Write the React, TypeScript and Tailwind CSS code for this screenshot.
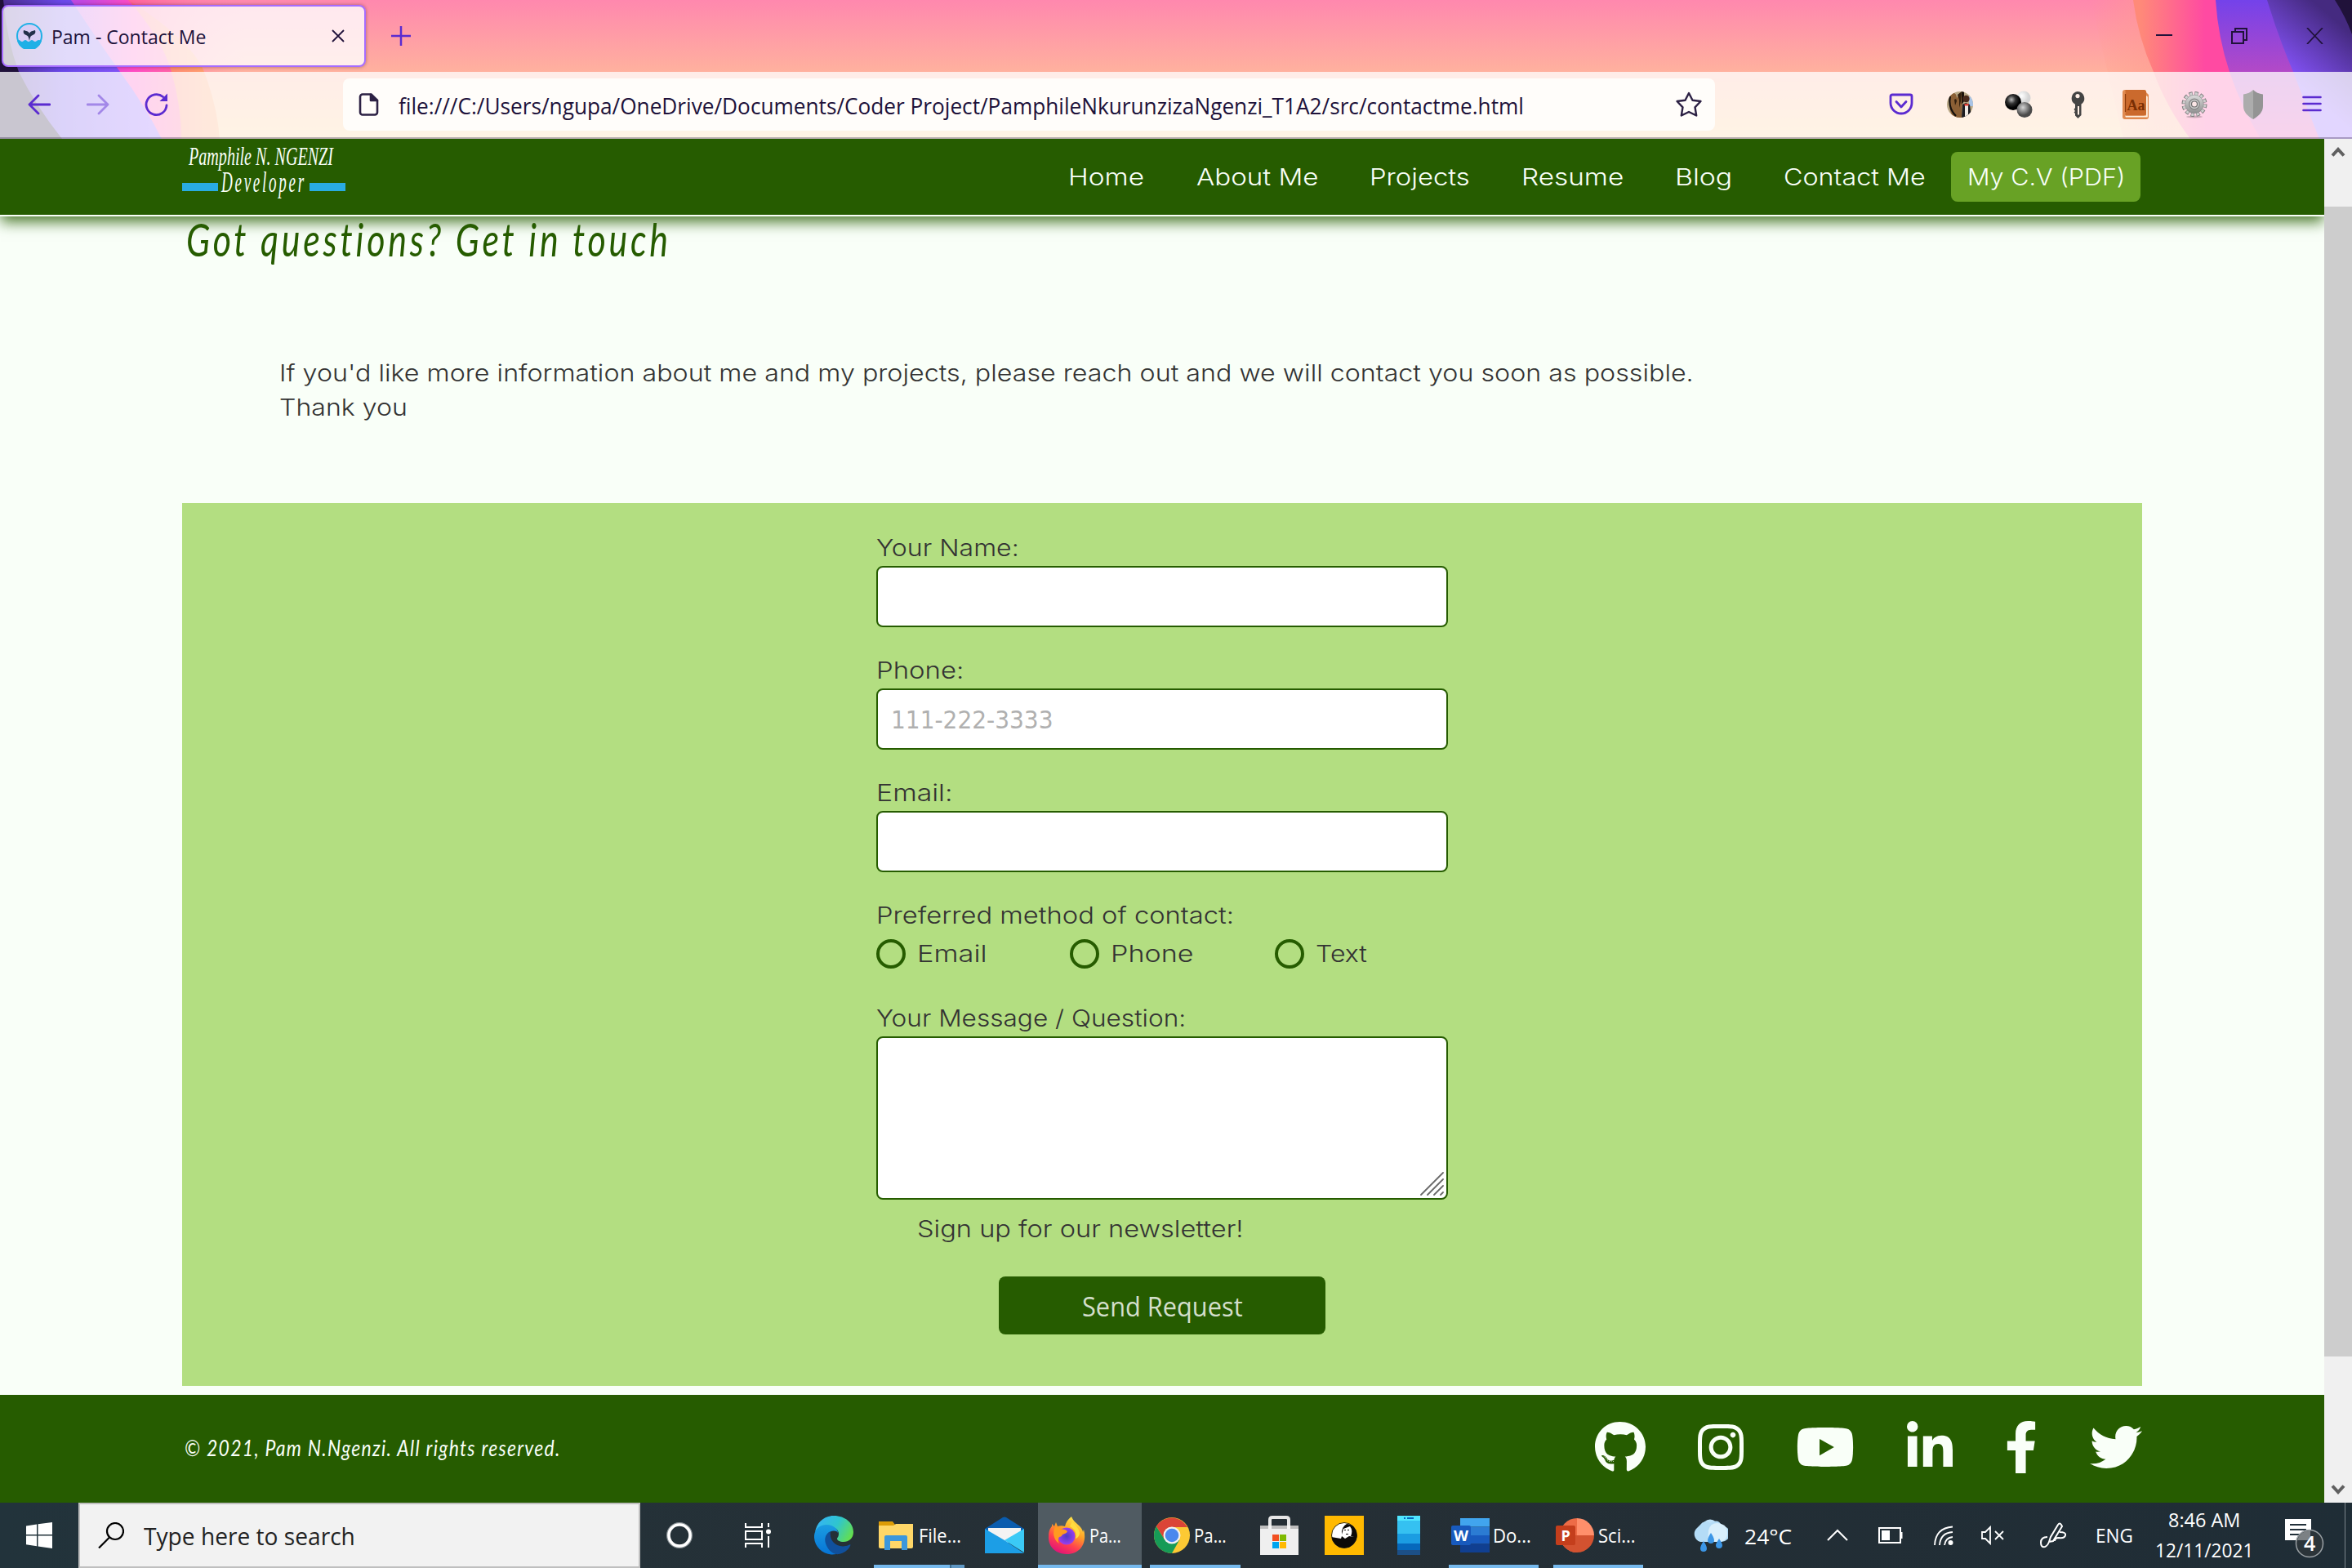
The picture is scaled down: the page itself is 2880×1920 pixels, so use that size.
import { useLayoutEffect, useRef, useState } from "react";
import type { ReactNode } from "react";
import { FaFacebookF, FaGithub, FaInstagram, FaLinkedinIn, FaTwitter, FaYoutube } from "react-icons/fa";

/* Single line of text stretched or condensed to a given width. */
function Fit({ w, className = "", children }: { w: number; className?: string; children: string }) {
  const ref = useRef<HTMLSpanElement>(null);
  const [scale, setScale] = useState(1);
  useLayoutEffect(() => {
    if (ref.current) setScale(w / ref.current.offsetWidth);
  }, [w]);
  return (
    <span className={`inline-block shrink-0 whitespace-nowrap ${className}`} style={{ width: w }}>
      <span ref={ref} className="inline-block origin-left" style={{ transform: `scaleX(${scale})` }}>
        {children}
      </span>
    </span>
  );
}

function ThemeArt() {
  return (
    <svg className="absolute inset-0" width="2880" height="170" viewBox="0 0 2880 170">
      <defs>
        <linearGradient id="base" x1="0" y1="0" x2="0" y2="1">
          <stop offset="0" stopColor="#ff88ae" />
          <stop offset=".52" stopColor="#ffb19e" />
          <stop offset="1" stopColor="#ffd090" />
        </linearGradient>
        <linearGradient id="lOrange" gradientUnits="userSpaceOnUse" x1="150" y1="0" x2="270" y2="0">
          <stop offset="0" stopColor="#ff5a8c" />
          <stop offset=".5" stopColor="#ff8a72" />
          <stop offset="1" stopColor="#ffa86e" />
        </linearGradient>
        <linearGradient id="lGlow" gradientUnits="userSpaceOnUse" x1="150" y1="0" x2="300" y2="0">
          <stop offset="0" stopColor="#ff5c98" />
          <stop offset="1" stopColor="#ff88ae" stopOpacity="0" />
        </linearGradient>
        <linearGradient id="lPink" gradientUnits="userSpaceOnUse" x1="100" y1="0" x2="225" y2="0">
          <stop offset="0" stopColor="#c048e0" />
          <stop offset=".5" stopColor="#ff4bc4" />
          <stop offset="1" stopColor="#ff6a9c" />
        </linearGradient>
        <linearGradient id="lPurple" gradientUnits="userSpaceOnUse" x1="0" y1="0" x2="190" y2="0">
          <stop offset="0" stopColor="#4a2c8c" />
          <stop offset=".4" stopColor="#6a48e8" />
          <stop offset="1" stopColor="#8f5cff" />
        </linearGradient>
        <linearGradient id="rPink" gradientUnits="userSpaceOnUse" x1="2620" y1="0" x2="2700" y2="0">
          <stop offset="0" stopColor="#ff8a78" />
          <stop offset="1" stopColor="#ff4aa2" />
        </linearGradient>
        <linearGradient id="rGlow" gradientUnits="userSpaceOnUse" x1="2560" y1="0" x2="2640" y2="0">
          <stop offset="0" stopColor="#ff9a84" stopOpacity="0" />
          <stop offset="1" stopColor="#ff9a90" stopOpacity=".6" />
        </linearGradient>
        <linearGradient id="rPurple" x1="0" y1="0" x2="0" y2="1">
          <stop offset="0" stopColor="#7442ea" />
          <stop offset=".5" stopColor="#b149c8" />
          <stop offset="1" stopColor="#e04ab0" />
        </linearGradient>
        <linearGradient id="rViolet" gradientUnits="userSpaceOnUse" x1="2800" y1="95" x2="2860" y2="25">
          <stop offset="0" stopColor="#8855ff" />
          <stop offset="1" stopColor="#452a80" />
        </linearGradient>
      </defs>
      <rect width="2880" height="170" fill="url(#base)" />
      <path d="M150 0H300V88H190Z" fill="url(#lGlow)" />
      <path d="M0 0H157C205 30 240 62 250 88Q266 130 269 170H0Z" fill="url(#lOrange)" />
      <path d="M0 0H157Q198 46 210 88Q222 130 222 170H0Z" fill="url(#lPink)" />
      <path d="M0 0H87Q120 50 147 88Q178 130 198 170H0Z" fill="url(#lPurple)" />
      <path d="M0 0H4Q8 48 23 88Q44 130 76 170H0Z" fill="#20123a" />
      <path d="M2560 0H2720V170H2600Z" fill="url(#rGlow)" />
      <path d="M2612 0Q2618 46 2637 88Q2652 130 2682 170H2880V0Z" fill="url(#rPink)" />
      <path d="M2713 0Q2716 46 2730 88Q2744 130 2768 170H2880V0Z" fill="url(#rPurple)" />
      <path d="M2776 0Q2790 46 2808 88Q2824 130 2840 170H2880V0Z" fill="url(#rViolet)" />
      <path d="M2859 0Q2872 20 2880 42V0Z" fill="#20123a" />
    </svg>
  );
}

function TabStrip() {
  return (
    <div className="relative flex h-[88px] items-center text-[#20123a]">
      <div className="ml-[2px] flex h-[76px] w-[446px] items-center rounded-lg border-2 border-[#a66cff] bg-white/80 pl-4 shadow-[0_0_4px_rgba(0,0,0,0.35)]">
        <svg width="32" height="32" viewBox="0 0 32 32">
          <circle cx="16" cy="16" r="15" fill="#d9cdf4" stroke="#1fb0e6" strokeWidth="2" />
          <path d="M1 22q2-2 4 0t4 0 4 0 4 0 4 0 4 0 6 0A15.500 15.500 0 0 1 1 22Z" fill="#1fb0e6" />
          <path d="M16 22c1-4 1-6 4-7 3-1 4-3 3-6-3 1-6 1-7 4-1-3-4-3-7-4-1 3 0 5 3 6 3 1 3 3 4 7Z" fill="#23304a" />
        </svg>
        <Fit w={189} className="ml-[11px] pt-0.5 text-[23px]">Pam - Contact Me</Fit>
        <svg className="ml-[154px]" width="16" height="16" viewBox="0 0 16 16" stroke="#20123a" strokeWidth="1.800">
          <path d="M1 1l14 14M15 1L1 15" />
        </svg>
      </div>
      <svg className="ml-[31px]" width="24" height="24" viewBox="0 0 24 24" stroke="#5b2bd0" strokeWidth="2.500">
        <path d="M0 12h24M12 0v24" />
      </svg>
      <svg className="ml-auto" width="20" height="20" viewBox="0 0 20 20">
        <path d="M0 9h20" stroke="#20123a" strokeWidth="2" />
      </svg>
      <svg className="ml-[72px]" width="20" height="20" viewBox="0 0 20 20" fill="none" stroke="#20123a" strokeWidth="2">
        <path d="M1 5h14v14H1zM5 5V1h14v14h-4" />
      </svg>
      <svg className="mr-[35px] ml-[72px]" width="21" height="20" viewBox="0 0 21 20" stroke="#20123a" strokeWidth="1.800">
        <path d="M1 0l19 20M20 0L1 20" />
      </svg>
    </div>
  );
}

function Toolbar() {
  return (
    <div className="relative flex h-[82px] items-center border-b-2 border-[#20123a]/30 bg-white/76 text-[#20123a]">
      <svg className="ml-[34px]" width="28" height="26" viewBox="0 0 28 26" fill="none" stroke="#5b2bd0" strokeWidth="2.800" strokeLinecap="round" strokeLinejoin="round">
        <path d="M27 13H2M13 2L2 13l11 11" />
      </svg>
      <svg className="ml-[44px] opacity-45" width="28" height="26" viewBox="0 0 28 26" fill="none" stroke="#5b2bd0" strokeWidth="2.800" strokeLinecap="round" strokeLinejoin="round">
        <path d="M1 13h25M15 2l11 11-11 11" />
      </svg>
      <svg className="ml-[43px]" width="30" height="30" viewBox="0 0 30 30" fill="none" stroke="#5b2bd0" strokeWidth="2.800" strokeLinecap="round">
        <path d="M27 16A12.500 12.500 0 1 1 22.500 5.500" />
        <path d="M28 1.500V11h-9.500Z" fill="#5b2bd0" stroke="none" />
      </svg>
      <div className="ml-[213px] flex h-16 w-[1680px] items-center rounded-lg bg-[#fffdfa]">
        <svg className="ml-[19px]" width="26" height="30" viewBox="0 0 26 30" fill="none" stroke="#2c2144" strokeWidth="2.600" strokeLinejoin="round">
          <path d="M5 2.500h10.500L23 10v14.500a3 3 0 0 1-3 3H5a3 3 0 0 1-3-3v-19a3 3 0 0 1 3-3Z" />
          <path d="M15 3v7h8Z" fill="#2c2144" />
        </svg>
        <Fit w={1378} className="ml-[23px] pt-1 text-[27.500px]">
          file:///C:/Users/ngupa/OneDrive/Documents/Coder Project/PamphileNkurunzizaNgenzi_T1A2/src/contactme.html
        </Fit>
        <svg className="ml-[185px]" width="34" height="32" viewBox="0 0 34 32" fill="none" stroke="#2c2144" strokeWidth="2.400" strokeLinejoin="round">
          <path d="M17 2l4.500 8.700 10 1.300-7 7.300 1.700 10.200L17 25l-9.200 4.500 1.700-10.200-7-7.300 10-1.300Z" />
        </svg>
      </div>
      {/* extension buttons */}
      <svg className="ml-[213px]" width="30" height="28" viewBox="0 0 30 28" fill="none" stroke="#5b2bd0" strokeWidth="2.800" strokeLinecap="round" strokeLinejoin="round">
        <path d="M4 2h22a2 2 0 0 1 2 2v8a13 13 0 0 1-26 0V4a2 2 0 0 1 2-2Z" />
        <path d="M9 10.500l6 6.500 6-6.500" />
      </svg>
      <svg className="ml-[41px]" width="32" height="32" viewBox="0 0 32 32">
        <clipPath id="av"><circle cx="16" cy="16" r="16" /></clipPath>
        <g clipPath="url(#av)">
          <path d="M0 0h32v32H0z" fill="#b9a886" />
          <path d="M4 4c4-4 8-2 8 4l4-6 3 2-1 28H8c-4-6-6-12-4-28Z" fill="#8b5f35" />
          <path d="M9 10q3-2 3 2l-2 5M18 0l-1 12-2 8V10l-2-6Z" fill="#33200f" />
          <path d="M18 0h3v12l-3 4Z" fill="#1d130c" />
          <path d="M4 6q-3 14 7 24" fill="none" stroke="#15100c" strokeWidth="2.200" />
          <path d="M27 6h5v12h-5z" fill="#a9c4e6" />
          <circle cx="23.500" cy="9" r="4.200" fill="#4a2a1c" />
          <path d="M19 16l4-2 5 2 2 16H18Z" fill="#1c1c22" />
          <path d="M22 15h4v17h-4z" fill="#efe9e4" />
          <path d="M21.500 15h5v2.500h-5z" fill="#e23b34" />
        </g>
      </svg>
      <svg className="ml-[39px]" width="34" height="34" viewBox="0 0 34 34">
        <defs>
          <radialGradient id="s1" cx=".35" cy=".35"><stop offset="0" stopColor="#fff" /><stop offset="1" stopColor="#d4d4d4" /></radialGradient>
          <radialGradient id="s2" cx=".4" cy=".35"><stop offset="0" stopColor="#bbb" /><stop offset=".5" stopColor="#333" /><stop offset="1" stopColor="#000" /></radialGradient>
          <radialGradient id="s3" cx=".4" cy=".35"><stop offset="0" stopColor="#d5d5d5" /><stop offset="1" stopColor="#4a4a4a" /></radialGradient>
        </defs>
        <circle cx="23" cy="9" r="8.500" fill="url(#s1)" />
        <circle cx="10" cy="14" r="10" fill="url(#s2)" />
        <circle cx="24" cy="23.500" r="9.500" fill="url(#s3)" />
      </svg>
      <svg className="ml-[46px]" width="18" height="33" viewBox="0 0 18 33">
        <path fillRule="evenodd" d="M9 0a8.500 8.500 0 0 1 4.500 15.500V29L9.500 33 6 29.500V27L4.500 25.500 6 24l-1.500-2L6 20v-4.200A8.500 8.500 0 0 1 9 0Zm0 3a2.600 2.600 0 1 0 .01 0ZM9 18v10.500h2V18Z" fill="#444" />
      </svg>
      <svg className="ml-[46px]" width="32" height="36" viewBox="0 -2 32 36">
        <path d="M3 -2h23a3 3 0 0 1 3 3l3 3v27a3 3 0 0 1-3 3H3a3 3 0 0 1-3-3V1a3 3 0 0 1 3-3Z" fill="#e08a50" />
        <path d="M3 29.500h26V5l1.800 1.500V31.500H4Z" fill="#fff0e0" />
        <path d="M3 -2h23a3 3 0 0 1 3 3v25.500a3 3 0 0 1-3 3H3.500V-2Z" fill="#cb6a2d" />
        <path d="M3.500 3v22" stroke="#8a3a0a" strokeWidth="1.200" />
        <text x="5.500" y="23" fontFamily="Liberation Serif" fontWeight="700" fontSize="18" textLength="22" fill="#7a2f04">Aa</text>
      </svg>
      <svg className="ml-10" width="32" height="34" viewBox="0 0 32 34">
        <defs><linearGradient id="gr" x1="0" y1="0" x2="0" y2="1"><stop offset="0" stopColor="#dcdcdc" /><stop offset="1" stopColor="#8f8f8f" /></linearGradient></defs>
        <ellipse cx="16" cy="32" rx="10" ry="1.500" fill="#000" opacity=".2" />
        <circle cx="16" cy="16.500" r="13" fill="none" stroke="#7d7d7d" strokeWidth="5" strokeDasharray="4.200 2.607" />
        <circle cx="16" cy="16.500" r="12.700" fill="none" stroke="#cfcfcf" strokeWidth="3.600" strokeDasharray="3 3.650" strokeDashoffset="-0.600" />
        <circle cx="16" cy="16.500" r="11.300" fill="url(#gr)" stroke="#8a8a8a" strokeWidth=".6" />
        <circle cx="16" cy="16.500" r="6.300" fill="#c9c9c9" stroke="#858585" strokeWidth="1.200" />
        <circle cx="16" cy="16.500" r="3.500" fill="#fbe6e6" stroke="#6d6d6d" strokeWidth="1.200" />
      </svg>
      <svg className="ml-11" width="24" height="36" viewBox="0 0 24 36">
        <path d="M12 0c3 3 7 5 12 5.500V20c0 7-5 12-12 16Z" fill="#949494" />
        <path d="M12 0C9 3 5 5 0 5.500V20c0 7 5 12 12 16Z" fill="#acacac" />
      </svg>
      <svg className="ml-12" width="24" height="22" viewBox="0 0 24 22" stroke="#5b2bd0" strokeWidth="2.600" strokeLinecap="round">
        <path d="M1.500 2h21M1.500 10h21M1.500 18h21" />
      </svg>
    </div>
  );
}

const links: [string, number, string][] = [
  ["Home", 93, ""],
  ["About Me", 149, "ml-16"],
  ["Projects", 123, "ml-[63px]"],
  ["Resume", 125, "ml-[63px]"],
  ["Blog", 70, "ml-[63px]"],
  ["Contact Me", 174, "ml-[63px]"],
];

function SiteNav() {
  return (
    <nav className="relative z-10 flex h-[95px] items-center border-b-2 border-[#f9fff8] bg-[#265c00] font-[Inter] text-[28px] font-[350] text-[#f9fff8] shadow-[0_8px_16px_-1px_rgba(38,92,0,0.8)]">
      <div className="ml-[223px] flex h-[93px] w-[200px] flex-col pt-[5px]">
        <Fit w={177} className="ml-2 font-['Liberation_Serif'] text-[31px] leading-[34px] italic">Pamphile N. NGENZI</Fit>
        <div className="flex h-9 items-center justify-between">
          <div className="mt-1 h-2.5 w-11 bg-[#29abe2]" />
          <Fit w={104} className="pb-1.5 font-['Liberation_Serif'] text-[35px] leading-9 font-normal tracking-[5px] italic">Developer</Fit>
          <div className="mt-1 h-2.5 w-11 bg-[#29abe2]" />
        </div>
      </div>
      <div className="ml-[885px] flex items-center">
        {links.map(([label, w, gap]) => (
          <Fit key={label} w={w} className={gap}>{label}</Fit>
        ))}
        <div className="ml-[31px] flex h-[61px] w-[232px] items-center rounded-lg bg-[#68a225] pl-[20px]">
          <Fit w={193}>My C.V (PDF)</Fit>
        </div>
      </div>
    </nav>
  );
}

function Label({ w, children }: { w: number; children: string }) {
  return (
    <div className="h-[43px] leading-[42px]">
      <Fit w={w}>{children}</Fit>
    </div>
  );
}

function Radio({ w, gap, children }: { w: number; gap: string; children: string }) {
  return (
    <div className={`flex items-center ${gap}`}>
      <span className="size-9 rounded-full border-4 border-[#265c00]" />
      <Fit w={w} className="ml-3.5">{children}</Fit>
    </div>
  );
}

const field = "h-[75px] w-[700px] rounded-lg border-2 border-[#265c00] bg-white";

function ContactForm() {
  return (
    <form className="mt-24 ml-[223px] h-[1081px] w-[2400px] bg-[#b3de81] pt-[34px]">
      <div className="mx-auto flex w-[700px] flex-col">
        <Label w={175}>Your Name:</Label>
        <div className={field} />
        <div className="h-8" />
        <Label w={107}>Phone:</Label>
        <div className={`${field} flex items-center pt-0.5 pl-4 font-['DejaVu_Sans_Condensed','DejaVu_Sans'] text-[31px] font-normal text-[#b0b0b0]`}>
          <Fit w={199}>111-222-3333</Fit>
        </div>
        <div className="h-8" />
        <Label w={93}>Email:</Label>
        <div className={field} />
        <div className="h-8" />
        <Label w={438}>Preferred method of contact:</Label>
        <div className="flex h-[50px] items-center">
          <Radio w={86} gap="">Email</Radio>
          <Radio w={101} gap="ml-[101px]">Phone</Radio>
          <Radio w={63} gap="ml-[100px]">Text</Radio>
        </div>
        <div className="h-[33px]" />
        <Label w={379}>Your Message / Question:</Label>
        <div className="flex h-[200px] w-[700px] items-end justify-end rounded-lg border-2 border-[#265c00] bg-white p-[3px]">
          <svg width="29" height="29" viewBox="0 0 29 29" stroke="#6a6a6a" strokeWidth="1.800" strokeLinecap="round">
            <path d="M1 28L28 1M9 28L28 9M17 28L28 17M25 28l3-3" />
          </svg>
        </div>
        <Fit w={399} className="mt-[15px] ml-[50px] leading-[42px]">Sign up for our newsletter!</Fit>
        <div className="mx-auto mt-[37px] flex h-[71px] w-[400px] items-center justify-center rounded-lg bg-[#265c00] pt-0.5 font-['Open_Sans'] text-[32px] font-normal text-[#d3dfcb]">
          <Fit w={197}>Send Request</Fit>
        </div>
      </div>
    </form>
  );
}

function Footer() {
  return (
    <footer className="mt-[11px] flex h-[132px] w-full items-center bg-[#265c00] pb-1 text-[#f9fff8]">
      <Fit w={461} className="ml-[226px] pt-0.5 font-[Lato] text-[27px] tracking-[1.500px] italic">© 2021, Pam N.Ngenzi. All rights reserved.</Fit>
      <div className="ml-[1266px] flex gap-16">
        <FaGithub className="h-16 w-[62px]" />
        <FaInstagram className="h-16 w-14" />
        <FaYoutube className="h-16 w-[72px]" />
        <FaLinkedinIn className="h-16 w-14" />
        <FaFacebookF className="h-16 w-10" />
        <FaTwitter className="h-16 w-16" />
      </div>
    </footer>
  );
}

function Scrollbar() {
  return (
    <div className="flex w-[34px] flex-col items-center bg-[#f0f0f0]">
      <svg className="mt-2" width="18" height="16" viewBox="0 0 18 16" fill="none" stroke="#606060" strokeWidth="4">
        <path d="M2 12.500L9 5l7 7.500" />
      </svg>
      <div className="mt-[59px] h-[1408px] w-full bg-[#cdcdcd]" />
      <svg className="mt-auto mb-2" width="18" height="16" viewBox="0 0 18 16" fill="none" stroke="#606060" strokeWidth="4">
        <path d="M2 3.500L9 11l7-7.500" />
      </svg>
    </div>
  );
}

function Task({ className, split = false, children }: { className: string; split?: boolean; children: ReactNode }) {
  return (
    <div className={`flex h-20 shrink-0 flex-col ${className}`}>
      <div className="flex h-[76px] items-center pt-1">{children}</div>
      <div className="flex h-1 bg-[#76b9ed]">
        {split && <div className="ml-auto h-1 w-[18px] border-l-2 border-[#3f6f93] bg-[#5f97c4]" />}
      </div>
    </div>
  );
}

function EdgeIcon() {
  return (
    <svg width="48" height="48" viewBox="0 0 48 48">
      <defs>
        <linearGradient id="e1" x1="0" y1=".3" x2="1" y2=".7"><stop offset="0" stopColor="#35b4f4" /><stop offset=".5" stopColor="#2fc5cf" /><stop offset="1" stopColor="#66e04a" /></linearGradient>
        <linearGradient id="e2" x1="0" y1="0" x2="0" y2="1"><stop offset="0" stopColor="#1b9de2" /><stop offset="1" stopColor="#0674d6" /></linearGradient>
      </defs>
      <path d="M1 20C3 8 12 0 24 0c14 0 24 9 24 20 0 8-6 12-12 12-5 0-8-2-8-4 0-1 2-2 2-6 0-5-6-9-13-9C9 13 3 16 1 20Z" fill="url(#e1)" />
      <path d="M0 24C1 16 7 11 15 11c8 0 14 5 14 10-2-4-11-3-14 3-3 8 2 18 12 23C12 50-1 38 0 24Z" fill="url(#e2)" />
      <path d="M20 19c-6 3-8 9-6 15 3 9 10 14 16 13 6-1 12-5 14-10 1-2 0-2-2-1-7 3-15 1-19-4-3-4-4-9-3-13Z" fill="#10509c" />
    </svg>
  );
}

function FirefoxIcon() {
  return (
    <svg width="46" height="46" viewBox="0 0 46 46">
      <defs>
        <linearGradient id="f1" x1=".8" y1="0" x2=".3" y2="1"><stop offset="0" stopColor="#fff44f" /><stop offset=".4" stopColor="#ffa025" /><stop offset=".7" stopColor="#ff3f50" /><stop offset="1" stopColor="#e0117a" /></linearGradient>
        <radialGradient id="f2"><stop offset="0" stopColor="#4b3cc4" /><stop offset="1" stopColor="#9a3df0" /></radialGradient>
      </defs>
      <path d="M29 0c2 6 8 9 11 13 2 2 3 5 3 6l1-3c4 14-2 30-21 30C9 46 0 36 1 24c0-6 2-10 4-12V9l3 3 2-5 2 5c3-1 6-1 9 0 1-5 4-9 8-12Z" fill="url(#f1)" />
      <circle cx="23" cy="24" r="10.500" fill="url(#f2)" />
      <path d="M9 13c3-1 5 0 7 3 3-1 6 0 8 2-1 3-4 3-6 4-1 2-2 3-4 3-2 3-1 6 0 8C6 28 6 18 9 13Z" fill="#ff9a20" />
      <path d="M27 12c6 3 9 8 7 15 3-1 5-4 5-7-1-6-6-10-9-14Z" fill="#ffdc40" />
    </svg>
  );
}

function ChromeIcon() {
  return (
    <svg width="44" height="44" viewBox="0 0 44 44">
      <circle cx="22" cy="22" r="22" fill="#fcc934" />
      <path d="M3 11A22 22 0 0 0 22 44L31 28 13 27Z" fill="#169b57" />
      <path d="M3 11A22 22 0 0 1 41 12H22L13 27Z" fill="#db4437" />
      <circle cx="22" cy="22" r="10.500" fill="#f1f1f1" />
      <circle cx="22" cy="22" r="8.300" fill="#4a88ee" />
    </svg>
  );
}

function Taskbar() {
  return (
    <div className="flex h-20 items-center bg-linear-to-r from-[#22333b] via-[#262f35] to-[#1f2d36] text-[24px] text-white">
      <div className="flex w-24 justify-center">
        <svg width="32" height="32" viewBox="0 0 32 32" fill="#fff">
          <path d="M0 4.500L13 2.500V15H0ZM14.500 2.300L32 0v15H14.500ZM0 16.500h13v12.700L0 27.300ZM14.500 16.500H32V32l-17.500-2.500Z" />
        </svg>
      </div>
      <div className="flex h-20 w-[688px] items-center border-2 border-[#bfbfbf] bg-[#f2f2f2] text-[#222]">
        <svg className="ml-[22px]" width="32" height="32" viewBox="0 0 32 32" fill="none" stroke="#000" strokeWidth="2.200">
          <circle cx="21" cy="11" r="10" />
          <path d="M14 18.500L1 31.500" />
        </svg>
        <Fit w={259} className="ml-6 pt-0.5 text-[29px]">Type here to search</Fit>
      </div>
      <div className="flex w-24 justify-center">
        <svg width="32" height="32" viewBox="0 0 32 32" fill="none">
          <circle cx="16" cy="16" r="14.500" stroke="#8c9498" strokeWidth="3" />
          <circle cx="16" cy="16" r="13" stroke="#fff" strokeWidth="3.600" />
        </svg>
      </div>
      <div className="flex w-24 justify-center">
        <svg width="32" height="32" viewBox="0 0 32 32" fill="none" stroke="#fff" strokeWidth="2">
          <path d="M1 1v5h20V1M1 31v-5h20v5M1 11h20v10H1zM29 1v5M29 17v14" />
          <circle cx="29" cy="11.500" r="3" fill="#fff" stroke="none" />
        </svg>
      </div>
      <div className="flex w-[90px] justify-center"><EdgeIcon /></div>
      <Task className="ml-1 w-[111px]" split>
        <svg className="ml-1.5" width="42" height="36" viewBox="0 0 42 36">
          <path d="M0 1h17l3 4v4H0Z" fill="#dd9c06" />
          <path d="M0 6h18l3-2h21v28a2 2 0 0 1-2 2H2a2 2 0 0 1-2-2Z" fill="#ffd768" />
          <path d="M7 36V20a2 2 0 0 1 2-2h24a2 2 0 0 1 2 2v16h-7V25H14v11Z" fill="#3c97dc" />
        </svg>
        <Fit w={52} className="ml-[7px]">File...</Fit>
      </Task>
      <div className="w-[90px] pl-[25px]">
        <svg width="48" height="46" viewBox="0 0 48 46">
          <path d="M0 15L22 1q2-1 4 0l22 14v4H0Z" fill="#0a5cae" />
          <path d="M4 14h40v10L24 34 4 24Z" fill="#f3f3f3" />
          <path d="M48 15v29L24 29Z" fill="#3bcaf6" />
          <path d="M0 15v30h48L24 29Z" fill="#1c9ee6" />
        </svg>
      </div>
      <Task className="w-[127px] bg-[#505b62]">
        <div className="ml-3"><FirefoxIcon /></div>
        <Fit w={39} className="ml-[5px]">Pa...</Fit>
      </Task>
      <Task className="ml-2.5 w-[111px]">
        <div className="ml-[5px]"><ChromeIcon /></div>
        <Fit w={40} className="ml-[5px]">Pa...</Fit>
      </Task>
      <svg className="ml-6" width="47" height="48" viewBox="0 0 47 48">
        <path d="M12 16V5q0-3 3-3h17q3 0 3 3v11" fill="none" stroke="#e6e6e6" strokeWidth="4" />
        <path d="M0 12h47v36H0Z" fill="#efefef" />
        <path d="M0 12h47v4H0Z" fill="#bdbdbd" />
        <path d="M10 12h4v4h-4zM33 12h4v4h-4z" fill="#f4f4f4" />
        <path d="M15 23h8v8h-8z" fill="#f25022" />
        <path d="M24 23h8v8h-8z" fill="#7fba00" />
        <path d="M15 32h8v8h-8z" fill="#00a4ef" />
        <path d="M24 32h8v8h-8z" fill="#ffb900" />
      </svg>
      <svg className="ml-8" width="48" height="48" viewBox="0 0 48 48">
        <clipPath id="badge"><circle cx="24" cy="24" r="15.500" /></clipPath>
        <path d="M0 0h48v48H0z" fill="#ffb900" />
        <circle cx="24" cy="24" r="15.500" fill="#fff" stroke="#3a2c00" />
        <g clipPath="url(#badge)" fill="#0c0a08">
          <path d="M8 26l6 1 6 1 1-3 4 3 5-3q6 1 10 0v16H8Z" />
          <path d="M27 10q9 0 13 9v8l-8-2q3-7-1-12l-8 3-2 7q-1-9 6-13Z" />
          <path d="M24 17h2v1h-2zM28 17h2v1h-2zM26 22h3v1h-3z" />
        </g>
      </svg>
      <svg className="ml-[41px]" width="28" height="48" viewBox="0 0 28 48">
        <path d="M0 0h28v6H0z" fill="#50e6ff" />
        <path d="M0 6h28v16H0z" fill="#35c1f1" />
        <path d="M0 22h28v12H0z" fill="#1b9de2" />
        <path d="M0 34h28v8H0z" fill="#0669bc" />
        <path d="M0 42h28v6H0z" fill="#1c4f86" />
        <path d="M8 2h2v2H8zM12 2h8v2h-8z" fill="#0669bc" />
      </svg>
      <Task className="ml-[35px] w-[110px]">
        <svg className="ml-[3px]" width="47" height="42" viewBox="0 0 47 42">
          <path d="M11 0h36v10.500H11z" fill="#41a5ee" />
          <path d="M11 10.500h36V21H11z" fill="#2b7cd3" />
          <path d="M11 21h36v10.500H11z" fill="#185abd" />
          <path d="M11 31.500h36V42H11z" fill="#103f91" />
          <rect y="9" width="24" height="24" rx="2" fill="#185abd" />
          <text x="3" y="27.500" fontFamily="Open Sans" fontWeight="700" fontSize="18" textLength="18" lengthAdjust="spacingAndGlyphs" fill="#fff">W</text>
        </svg>
        <Fit w={47} className="ml-1">Do...</Fit>
      </Task>
      <Task className="ml-[18px] w-[110px]">
        <svg className="ml-[3px]" width="47" height="42" viewBox="0 0 47 42">
          <path d="M26 0a21 21 0 1 0 0 42V21Z" fill="#ed6c47" />
          <path d="M26 0a21 21 0 0 1 21 21H26Z" fill="#ff8f6b" />
          <path d="M47 21a21 21 0 0 1-42 0Z" fill="#d35230" />
          <rect y="9" width="24" height="24" rx="2" fill="#c43e1c" />
          <text x="6.500" y="27.500" fontFamily="Open Sans" fontWeight="700" fontSize="18" fill="#fff">P</text>
        </svg>
        <Fit w={46} className="ml-[5px]">Sci...</Fit>
      </Task>
      {/* system tray */}
      <svg className="ml-[62px] shrink-0" width="42" height="40" viewBox="0 0 42 40">
        <circle cx="20" cy="10" r="9.500" fill="#bfe2fa" />
        <path d="M8 7a8 8 0 0 1 12-2q10-6 14 3a9 9 0 0 1 0 20H8A10 10 0 0 1 4 11Z" fill="#b4dcf7" />
        <path d="M18 14q2-9 11-9 12 1 12 12 0 11-11 11H17Z" fill="#d9effc" />
        <path d="M21 17q4 6 4 9a4 4 0 0 1-8 0q0-3 4-9ZM31 24q4 6 4 8a4 4 0 0 1-8 0q0-2 4-8ZM12 27q4 6 4 9a4 4 0 0 1-8 0q0-3 4-9Z" fill="#3c96e6" />
      </svg>
      <Fit w={58} className="ml-[20px] pt-0.5 text-[26px]">24°C</Fit>
      <svg className="ml-[43px] shrink-0" width="26" height="16" viewBox="0 0 26 16" fill="none" stroke="#fff" strokeWidth="2">
        <path d="M1 14L13 2l12 12" />
      </svg>
      <svg className="ml-[37px] shrink-0" width="30" height="20" viewBox="0 0 30 20" fill="none" stroke="#fff" strokeWidth="2">
        <path d="M1 1h26v18H1zM28.500 6v8" />
        <path d="M4 4h10v12H4z" fill="#fff" stroke="none" />
      </svg>
      <svg className="ml-[38px] shrink-0" width="24" height="24" viewBox="0 0 24 24" fill="none" stroke="#fff" strokeWidth="1.800">
        <circle cx="20.500" cy="21" r="3" fill="#fff" stroke="none" />
        <path d="M13 24Q14 15 23 14M7 24Q8 9 23 8M1 24Q2 3 23 1.500" />
      </svg>
      <svg className="ml-[34px] shrink-0" width="29" height="24" viewBox="0 0 29 24" fill="none" stroke="#fff" strokeWidth="1.800">
        <path d="M1 8h4l6-6v20l-6-6H1ZM17 7l10 10M27 7L17 17" />
      </svg>
      <svg className="ml-[43px] shrink-0" width="32" height="32" viewBox="0 0 32 32" fill="none" stroke="#fff" strokeWidth="2">
        <path d="M11 24L13 18 22 3q2-3 4 0l1 2-11 18ZM9 18Q1 18 1 25q0 6 5 5 3-1 5-6M24 12q8 0 7 4t-8 3q-5 0-5 4" />
      </svg>
      <Fit w={46} className="ml-[36px]">ENG</Fit>
      <div className="ml-[27px] flex w-[120px] shrink-0 flex-col items-center pb-0.5 leading-[37px]">
        <Fit w={88}>8:46 AM</Fit>
        <Fit w={120}>12/11/2021</Fit>
      </div>
      <svg className="mt-2 ml-[39px] shrink-0" width="48" height="48" viewBox="0 0 48 48">
        <path d="M0 0h32v26H19l-6 6v-6H0Z" fill="#fff" />
        <path d="M6 7h20M6 13h20M6 19h14" stroke="#22303a" strokeWidth="2" />
        <circle cx="30" cy="30" r="16.500" fill="#2b3439" stroke="#9aa0a4" strokeWidth="1.500" />
        <path d="M15 26A16 16 0 0 1 31 14V26Z" fill="#7c8184" />
        <text x="23" y="38.500" fontFamily="Open Sans" fontWeight="600" fontSize="25" fill="#fff">4</text>
      </svg>
      <div className="ml-auto h-20 w-[9px] border-l border-[#7b858b]" />
    </div>
  );
}

export default function App() {
  return (
    <div className="h-[1920px] w-[2880px] overflow-hidden bg-[#f9fff8] font-['Open_Sans',sans-serif]">
      <header className="relative h-[170px] bg-[#ffb19e]">
        <ThemeArt />
        <TabStrip />
        <Toolbar />
      </header>
      <div className="flex h-[1670px]">
        <div className="h-[1670px] w-[2846px] overflow-hidden bg-[#f9fff8]">
          <SiteNav />
          <main className="relative z-20 font-[Inter] text-[28px] font-[350] text-[#333]">
            <h1 className="ml-[228px] h-[52px] font-[Lato] text-[57px] leading-[54px] font-normal tracking-[5px] text-[#265c00] italic">
              <Fit w={594}>Got questions? Get in touch</Fit>
            </h1>
            <p className="mt-[119px] ml-[342px] h-[84px] leading-[42px]">
              <Fit w={1732}>
                If you'd like more information about me and my projects, please reach out and we will contact you soon as possible.
              </Fit>
              <br />
              <Fit w={157}>Thank you</Fit>
            </p>
            <ContactForm />
          </main>
          <Footer />
        </div>
        <Scrollbar />
      </div>
      <Taskbar />
    </div>
  );
}
